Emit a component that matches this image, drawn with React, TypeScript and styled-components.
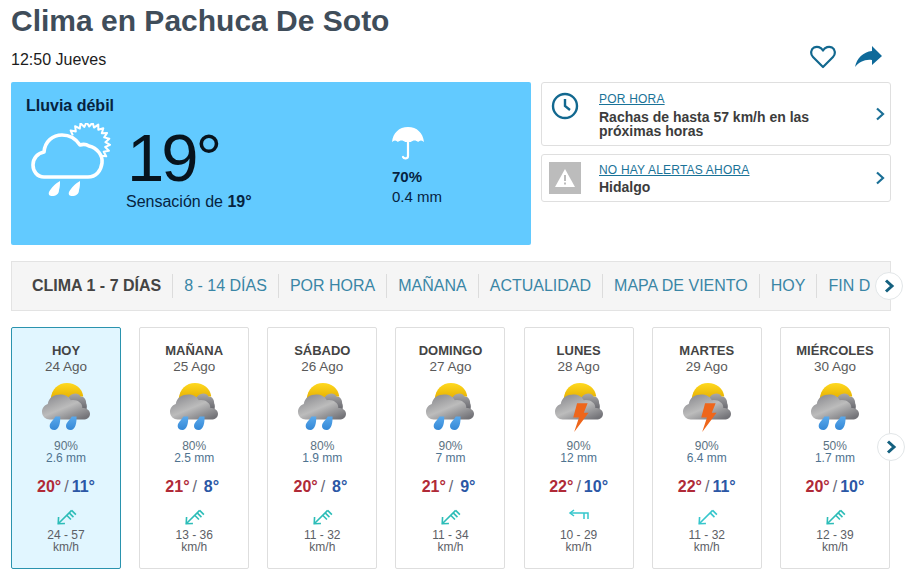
import React from "react";
import styled, { createGlobalStyle } from "styled-components";

const Global = createGlobalStyle`
  html, body { margin: 0; padding: 0; background: #fff; }
  body { font-family: "Liberation Sans", Arial, sans-serif; overflow: hidden; }
  * { box-sizing: border-box; }
`;

const Page = styled.div`
  width: 907px;
  height: 572px;
  padding: 0 16px 0 11px;
  overflow: hidden;
  display: flex;
  flex-direction: column;
`;
const Title = styled.h1`
  margin: 3px 0 0;
  height: 36px;
  font-size: 30px;
  line-height: 36px;
  font-weight: 700;
  color: #3f4d5a;
`;
const MetaRow = styled.div`
  display: flex;
  justify-content: space-between;
  align-items: center;
  height: 43px;
`;
const Time = styled.span`
  font-size: 16px;
  color: #1c1c1c;
  margin-top: -2px;
`;
const Actions = styled.div`
  display: flex;
  gap: 19px;
  align-items: center;
  padding-right: 8px;
  margin-top: -8px;
`;
const Top = styled.div`
  display: flex;
  gap: 10px;
  align-items: flex-start;
`;
const Now = styled.section`
  width: 520px;
  height: 163px;
  background: #62caff;
  border-radius: 2px;
  padding: 14px 15px;
  color: #06233f;
`;
const Cond = styled.div`
  font-size: 16px;
  font-weight: 700;
  line-height: 19px;
`;
const NowBody = styled.div`
  display: flex;
  margin-top: 5px;
`;
const NowIcon = styled.div`
  width: 104px;
  padding: 3px 0 0 5px;
`;
const Temp = styled.div`
  width: 262px;
  padding-top: 4px;
`;
const BigTemp = styled.div`
  font-size: 67px;
  line-height: 68px;
  color: #07131d;
  letter-spacing: -3px;
  margin-left: -3px;
`;
const Feels = styled.div`
  font-size: 16px;
  line-height: 20px;
  margin-left: -4px;
`;
const Rain = styled.div`
  padding-top: 7px;
  font-size: 15px;
  line-height: 20px;
  svg { display: block; margin-bottom: 6px; }
  b { display: block; }
`;
const Side = styled.div`
  flex: 1;
  display: flex;
  flex-direction: column;
  gap: 8px;
`;
const Info = styled.a<{ $h: number; $top: number }>`
  height: ${(p) => p.$h}px;
  border: 1px solid #dfdfdf;
  border-radius: 3px;
  display: flex;
  position: relative;
  padding: ${(p) => p.$top}px 30px 0 0;
`;
const InfoIcon = styled.div`
  width: 46px;
  margin-right: 11px;
  display: flex;
  justify-content: center;
  flex-shrink: 0;
`;
const InfoText = styled.div`
  flex: 1;
`;
const InfoHead = styled.div`
  font-size: 12px;
  line-height: 14px;
  color: #1a7398;
  letter-spacing: 0.2px;
  text-decoration: underline;
`;
const InfoBody = styled.div<{ $gap: number }>`
  margin-top: ${(p) => p.$gap}px;
  font-size: 14px;
  line-height: 14px;
  font-weight: 700;
  color: #3c3c3c;
`;
const InfoChevron = styled.div`
  position: absolute;
  right: 4px;
  top: 50%;
  transform: translateY(-50%);
  display: flex;
`;
const AlertBox = styled.div`
  width: 32px;
  height: 32px;
  background: #bcbcbc;
  margin-top: -1px;
  display: flex;
  align-items: center;
  justify-content: center;
`;
const TabsBar = styled.nav`
  margin-top: 16px;
  height: 50px;
  background: #f5f5f5;
  border: 1px solid #e3e3e3;
  display: flex;
  align-items: center;
  padding-left: 20px;
  position: relative;
`;
const TabClip = styled.div`
  display: flex;
  align-items: center;
  overflow: hidden;
  white-space: nowrap;
  width: 838px;
`;
const Tab = styled.a<{ $active?: boolean }>`
  font-size: 16px;
  line-height: 24px;
  color: ${(p) => (p.$active ? "#444" : "#3a86a6")};
  font-weight: ${(p) => (p.$active ? 700 : 400)};
  padding: 0 11px;
  border-left: ${(p) => (p.$active ? "none" : "1px solid #dcdcdc")};
  ${(p) => (p.$active ? "padding-left: 0;" : "")}
`;
const Round = styled.button`
  position: absolute;
  width: 28px;
  height: 28px;
  border-radius: 50%;
  border: 1px solid #e2e6e8;
  background: #fff;
  padding: 0;
  display: flex;
  align-items: center;
  justify-content: center;
`;
const TabNext = styled(Round)`
  right: -13px;
  top: 10px;
`;
const Days = styled.div`
  margin-top: 16px;
  display: flex;
  gap: 18.17px;
  position: relative;
`;
const DaysNext = styled(Round)`
  right: -14px;
  top: 106px;
`;
const Day = styled.article<{ $today?: boolean }>`
  height: 242px;
  flex: 0 0 110px;
  border: 1px solid ${(p) => (p.$today ? "#2a93ae" : "#dedede")};
  background: ${(p) => (p.$today ? "#e1f6ff" : "#fff")};
  border-radius: 2px;
  display: flex;
  flex-direction: column;
  align-items: center;
  padding-top: 15px;
  text-align: center;
`;
const DayName = styled.div`
  font-size: 13px;
  line-height: 16px;
  font-weight: 700;
  color: #444;
`;
const DayDate = styled.div`
  font-size: 13.5px;
  line-height: 15px;
  color: #5a5a5a;
`;
const DayIcon = styled.div`
  margin-top: 7px;
  height: 59px;
  svg { display: block; }
`;
const Small = styled.div`
  font-size: 12px;
  line-height: 12px;
  color: #5b7282;
`;
const Mm = styled(Small)`
  color: #4f7390;
`;
const Temps = styled.div`
  margin-top: 13px;
  font-size: 16px;
  line-height: 20px;
  font-weight: 700;
  color: #667;
  display: flex;
  align-items: center;
  i { font-weight: 400; font-style: normal; margin: 0 3px; }
`;
const Hi = styled.span`
  color: #b02a37;
`;
const Lo = styled.span`
  color: #2b57a5;
  display: inline-block;
  min-width: 23px;
  text-align: center;
`;
const WindWrap = styled.div`
  margin-top: 5px;
  height: 27px;
  display: flex;
  align-items: center;
`;
const Wind = styled.div`
  font-size: 12px;
  line-height: 12px;
  color: #5c6066;
`;

function CurrentIcon() {
  const cx = 57;
  const cy = 21;
  const pts: string[] = [];
  for (let i = 0; i <= 28; i++) {
    const a = ((-150 + i * 8) * Math.PI) / 180;
    const r = i % 2 === 0 ? 17.5 : 22;
    pts.push(`${(cx + r * Math.cos(a)).toFixed(1)},${(cy + r * Math.sin(a)).toFixed(1)}`);
  }
  return (
    <svg width="82" height="74" viewBox="0 0 82 74" fill="none">
      <polyline points={pts.join(" ")} stroke="#fff" strokeWidth="2" fill="none" strokeLinejoin="round" />
      <path
        d="M13 54C6 54 2 48 2 42c0-7 5-12 11-13 1-11 9-17 18-17 8 0 14 4 18 10 3-1 6-1 9 1 8 2 14 9 13 17-1 8-6 14-14 14Z"
        fill="#62caff"
        stroke="#fff"
        strokeWidth="3.6"
        strokeLinejoin="round"
      />
      <path d="M29 58c-4 2-9 7-11 11-1 3 1 4 3 4 4 0 7-2 7-6 1-3 1-6 1-9Z" fill="#fff" />
      <path d="M49 58c-4 2-9 7-11 11-1 3 1 4 3 4 4 0 7-2 7-6 1-3 1-6 1-9Z" fill="#fff" />
    </svg>
  );
}

function Umbrella() {
  return (
    <svg width="32" height="34" viewBox="0 0 32 34">
      <path d="M16 0C7 0 1 6 0 15c2-2 4-2 6 0 2-2 5-2 7 0h6c2-2 5-2 7 0 2-2 4-2 6 0C31 6 25 0 16 0Z" fill="#fff" />
      <path d="M16 14v15c0 3-4 3-5 1" stroke="#fff" strokeWidth="2.2" fill="none" strokeLinecap="round" />
    </svg>
  );
}

function WeatherIcon({ kind, uid }: { kind: "rain" | "heavy" | "storm"; uid: string }) {
  return (
    <svg width="48" height="52" viewBox="0 0 50 52">
      <defs>
        <linearGradient id={`${uid}c`} x1="0" y1="0" x2="0.8" y2="1">
          <stop offset="0" stopColor="#828287" />
          <stop offset="0.55" stopColor="#bcbcbc" />
          <stop offset="1" stopColor="#737378" />
        </linearGradient>
        <linearGradient id={`${uid}b`} x1="0" y1="0" x2="0" y2="1">
          <stop offset="0" stopColor="#a8a8aa" />
          <stop offset="1" stopColor="#66666c" />
        </linearGradient>
        <linearGradient id={`${uid}s`} x1="0" y1="0" x2="0" y2="1">
          <stop offset="0" stopColor="#ffd91f" />
          <stop offset="1" stopColor="#e5ae00" />
        </linearGradient>
        <linearGradient id={`${uid}d`} x1="0" y1="0" x2="0" y2="1">
          <stop offset="0" stopColor="#5aa9ec" />
          <stop offset="1" stopColor="#3488d6" />
        </linearGradient>
      </defs>
      <path d="M9 18C10 7 17 1 26 1c9 0 16 6 17 14Z" fill={`url(#${uid}s)`} />
      <path d="M26 22c0-6 4-10 9-10 2 0 4 1 5 3 4 0 6 3 6 7 1 2 1 5 0 7H30Z" fill={`url(#${uid}b)`} />
      <path
        d="M8 39c-4 0-8-3-8-8 0-4 3-7 6-8 1-7 7-10 13-10 5 0 9 2 11 6 3-1 7 0 9 2 2 1 3 3 3 6 4 0 8 2 8 6 0 4-3 6-7 6Z"
        fill={`url(#${uid}c)`}
      />
      {kind === "storm" ? (
        <path d="M23 22h11l-4 10h5L20 52l5-15h-6Z" fill="#ee661b" />
      ) : (
        <>
          <path d="M14 36h5c0 3 0 6-1 9-1 3-3 5-5 5-3 0-5-2-5-4 0-4 4-6 6-10Z" fill={`url(#${uid}d)`} />
          <path d="M31 36h5c0 3 0 6-1 9-1 3-3 5-5 5-3 0-5-2-5-4 0-4 4-6 6-10Z" fill={`url(#${uid}d)`} />
        </>
      )}
    </svg>
  );
}

function WindIcon({ west, calm }: { west?: boolean; calm?: boolean }) {
  if (west) {
    return (
      <svg width="22" height="14" viewBox="0 0 22 14" fill="none" stroke="#36c6cc" strokeWidth="1.5">
        <path d="M6 1 2 4l4 3" />
        <path d="M2 4h18v6" />
        <path d="M16 4v6" />
      </svg>
    );
  }
  return (
    <svg width="22" height="18" viewBox="0 0 22 18" fill="none" stroke={calm ? "#36c6cc" : "#2dbdb8"} strokeWidth="1.6">
      <g transform="rotate(-45 11 9)">
        <path d="M0 9h19" />
        <path d="M5 4.500 0 9l5 4.500" />
        <path d="M19 9v6" />
        <path d="M15.500 9v6" />
        {!calm && <path d="M12 9v6" />}
      </g>
    </svg>
  );
}

const Chevron = ({ color = "#1a6f96", w = 2.2 }: { color?: string; w?: number }) => (
  <svg width="12" height="16" viewBox="0 0 12 16" fill="none">
    <path d="M3 2.500 9 8l-6 5.500" stroke={color} strokeWidth={w} />
  </svg>
);

const days = [
  { n: "HOY", d: "24 Ago", k: "rain", p: "90%", m: "2.6 mm", hi: "20°", lo: "11°", w: "24 - 57", today: true },
  { n: "MAÑANA", d: "25 Ago", k: "rain", p: "80%", m: "2.5 mm", hi: "21°", lo: "8°", w: "13 - 36" },
  { n: "SÁBADO", d: "26 Ago", k: "rain", p: "80%", m: "1.9 mm", hi: "20°", lo: "8°", w: "11 - 32" },
  { n: "DOMINGO", d: "27 Ago", k: "heavy", p: "90%", m: "7 mm", hi: "21°", lo: "9°", w: "11 - 34" },
  { n: "LUNES", d: "28 Ago", k: "storm", p: "90%", m: "12 mm", hi: "22°", lo: "10°", w: "10 - 29", west: true },
  { n: "MARTES", d: "29 Ago", k: "storm", p: "90%", m: "6.4 mm", hi: "22°", lo: "11°", w: "11 - 32", calm: true },
  { n: "MIÉRCOLES", d: "30 Ago", k: "rain", p: "50%", m: "1.7 mm", hi: "20°", lo: "10°", w: "12 - 39" },
] as const;

const tabs = ["8 - 14 DÍAS", "POR HORA", "MAÑANA", "ACTUALIDAD", "MAPA DE VIENTO", "HOY", "FIN DE SEMANA"];

export default function App() {
  return (
    <Page>
      <Global />
      <Title>Clima en Pachuca De Soto</Title>
      <MetaRow>
        <Time>12:50 Jueves</Time>
        <Actions>
          <svg width="26" height="24" viewBox="0 0 26 24" fill="none">
            <path d="M13 22 3 12C0 9 1 4 4 2.500c3-1.500 7-.5 9 3 2-3.500 6-4.500 9-3 3 1.500 4 6.500 1 9.500Z" stroke="#12688f" strokeWidth="2.2" strokeLinejoin="round" />
          </svg>
          <svg width="28" height="22" viewBox="0 0 28 22">
            <path d="M17 0l10 10-10 9v-5C10 13 4 16 0 21 2 12 8 6 17 5Z" fill="#0f6a9a" />
          </svg>
        </Actions>
      </MetaRow>
      <Top>
        <Now>
          <Cond>Lluvia débil</Cond>
          <NowBody>
            <NowIcon>
              <CurrentIcon />
            </NowIcon>
            <Temp>
              <BigTemp>19°</BigTemp>
              <Feels>
                Sensación de <b>19°</b>
              </Feels>
            </Temp>
            <Rain>
              <Umbrella />
              <b>70%</b>
              0.4 mm
            </Rain>
          </NowBody>
        </Now>
        <Side>
          <Info $h={64} $top={9}>
            <InfoIcon>
              <svg width="28" height="28" viewBox="0 0 28 28" fill="none" stroke="#12688f" strokeWidth="2.4">
                <circle cx="14" cy="14" r="12" />
                <path d="M14 7v7l5 4" />
              </svg>
            </InfoIcon>
            <InfoText>
              <InfoHead>POR HORA</InfoHead>
              <InfoBody $gap={4}>Rachas de hasta 57 km/h en las próximas horas</InfoBody>
            </InfoText>
            <InfoChevron>
              <Chevron />
            </InfoChevron>
          </Info>
          <Info $h={48} $top={8}>
            <InfoIcon>
              <AlertBox>
                <svg width="20" height="18" viewBox="0 0 20 18">
                  <path d="M10 0 20 18H0Z" fill="#fff" />
                  <path d="M9 6h2v6H9Zm0 7.500h2v2H9Z" fill="#bcbcbc" />
                </svg>
              </AlertBox>
            </InfoIcon>
            <InfoText>
              <InfoHead>NO HAY ALERTAS AHORA</InfoHead>
              <InfoBody $gap={3}>Hidalgo</InfoBody>
            </InfoText>
            <InfoChevron>
              <Chevron />
            </InfoChevron>
          </Info>
        </Side>
      </Top>
      <TabsBar>
        <TabClip>
          <Tab $active>CLIMA 1 - 7 DÍAS</Tab>
          {tabs.map((t) => (
            <Tab key={t}>{t}</Tab>
          ))}
        </TabClip>
        <TabNext>
          <Chevron color="#14607f" w={3} />
        </TabNext>
      </TabsBar>
      <Days>
        {days.map((x, i) => (
          <Day key={x.n} $today={"today" in x}>
            <DayName>{x.n}</DayName>
            <DayDate>{x.d}</DayDate>
            <DayIcon>
              <WeatherIcon kind={x.k} uid={`w${i}`} />
            </DayIcon>
            <Small>{x.p}</Small>
            <Mm>{x.m}</Mm>
            <Temps>
              <Hi>{x.hi}</Hi>
              <i>/</i>
              <Lo>{x.lo}</Lo>
            </Temps>
            <WindWrap>
              <WindIcon west={"west" in x} calm={"calm" in x} />
            </WindWrap>
            <Wind>{x.w}</Wind>
            <Wind>km/h</Wind>
          </Day>
        ))}
        <DaysNext>
          <Chevron color="#14607f" w={3} />
        </DaysNext>
      </Days>
    </Page>
  );
}
